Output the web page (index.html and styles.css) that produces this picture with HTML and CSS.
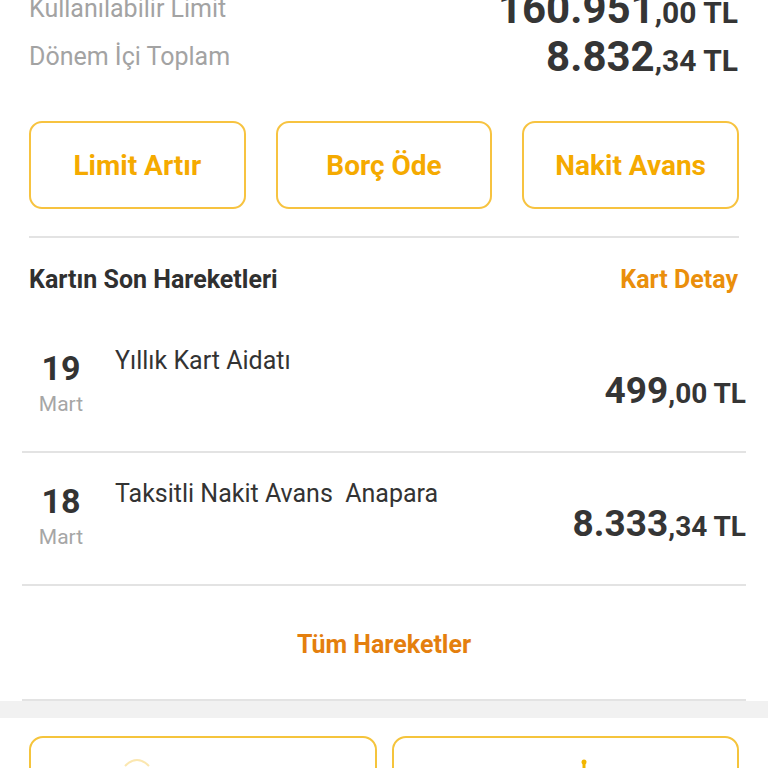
FILE: index.html
```html
<!DOCTYPE html>
<html lang="tr">
<head>
<meta charset="utf-8">
<title>Kart</title>
<link rel="stylesheet" href="styles.css">
</head>
<body>
<div class="page">
  <section class="summary">
    <div class="sum-row">
      <span class="sum-label">Kullanılabilir Limit</span>
      <span class="amount sum-amount"><span class="big">160.951</span><span class="small">,00 TL</span></span>
    </div>
    <div class="sum-row">
      <span class="sum-label">Dönem İçi Toplam</span>
      <span class="amount sum-amount"><span class="big">8.832</span><span class="small">,34 TL</span></span>
    </div>
  </section>

  <section class="actions">
    <button class="act-btn">Limit Artır</button>
    <button class="act-btn">Borç Öde</button>
    <button class="act-btn">Nakit Avans</button>
  </section>

  <div class="divider inset"></div>

  <section class="tx-head">
    <span class="tx-title">Kartın Son Hareketleri</span>
    <span class="tx-link">Kart Detay</span>
  </section>

  <section class="tx-list">
    <div class="tx-row">
      <div class="tx-date">
        <span class="day">19</span>
        <span class="month">Mart</span>
      </div>
      <div class="tx-desc">Yıllık Kart Aidatı</div>
      <div class="amount tx-amount"><span class="big">499</span><span class="small">,00 TL</span></div>
    </div>
    <div class="tx-row">
      <div class="tx-date">
        <span class="day">18</span>
        <span class="month">Mart</span>
      </div>
      <div class="tx-desc">Taksitli Nakit Avans&nbsp; Anapara</div>
      <div class="amount tx-amount"><span class="big">8.333</span><span class="small">,34 TL</span></div>
    </div>
    <div class="tx-all">Tüm Hareketler</div>
  </section>

  <div class="band"></div>

  <section class="cards">
    <div class="card">
      <svg class="card-icon left" width="40" height="40" viewBox="0 0 40 40"><path d="M8 22 Q20 10 32 22" fill="none" stroke="#fbe7b0" stroke-width="2"/></svg>
    </div>
    <div class="card">
      <svg class="card-icon right" width="40" height="40" viewBox="0 0 40 40"><circle cx="20" cy="6" r="2.5" fill="#f2b600"/><path d="M20 8 V30" stroke="#f2b600" stroke-width="3" fill="none"/></svg>
    </div>
  </section>
</div>
</body>
</html>
```

FILE: styles.css
```css
* { box-sizing: border-box; }
html, body { margin: 0; padding: 0; }
body {
  width: 768px;
  height: 768px;
  overflow: hidden;
  background: #ffffff;
  font-family: Roboto, "Noto Sans", "Liberation Sans", sans-serif;
  color: #333333;
}
.page { width: 768px; }

.summary {
  margin-top: -16px;
  padding: 0 30px 0 29px;
}
.sum-row {
  height: 48px;
  display: flex;
  align-items: center;
  justify-content: space-between;
}
.sum-label {
  font-size: 25px;
  color: #a3a3a3;
}
.amount {
  font-weight: 700;
  color: #353535;
  white-space: nowrap;
}
.sum-amount .big { font-size: 42px; }
.sum-amount .small { font-size: 30px; }

.actions {
  margin-top: 41px;
  padding: 0 29px;
  display: grid;
  grid-template-columns: repeat(3, 1fr);
  column-gap: 30px;
}
.act-btn {
  height: 88px;
  border: 2px solid #f7c340;
  border-radius: 13px;
  background: #ffffff;
  color: #f5aa00;
  font-family: Roboto, "Noto Sans", sans-serif;
  font-weight: 700;
  font-size: 28px;
  padding: 0;
}

.divider { height: 2px; background: #e3e3e3; }
.divider.inset { margin: 27px 29px 0 29px; }

.tx-head {
  height: 82px;
  padding: 0 30px 0 29px;
  display: flex;
  align-items: center;
  justify-content: space-between;
}
.tx-title { font-size: 25px; font-weight: 700; color: #303030; }
.tx-link { font-size: 25px; font-weight: 700; color: #ea8f0c; }

.tx-list { margin: 0 22px; }
.tx-row {
  height: 133px;
  border-bottom: 2px solid #e3e3e3;
  display: flex;
  align-items: flex-start;
}
.tx-date {
  width: 78px;
  display: flex;
  flex-direction: column;
  align-items: center;
  margin-top: 29px;
}
.day { font-size: 34px; font-weight: 700; line-height: 38px; color: #333333; }
.month { font-size: 21px; line-height: 26px; margin-top: 4px; color: #a6a6a6; }
.tx-desc {
  margin-left: 15px;
  margin-top: 26px;
  font-size: 25px;
  line-height: 30px;
  color: #333333;
  flex: 1;
}
.tx-amount { margin-top: 49px; line-height: 44px; }
.tx-amount .big { font-size: 37px; }
.tx-amount .small { font-size: 28px; }

.tx-all {
  height: 115px;
  border-bottom: 2px solid #e3e3e3;
  display: flex;
  align-items: center;
  justify-content: center;
  font-size: 25px;
  font-weight: 700;
  color: #e47f0e;
  padding-top: 4px;
}

.band { height: 17px; background: #f1f1f1; }

.cards {
  margin-top: 18px;
  padding: 0 29px;
  display: grid;
  grid-template-columns: 1fr 1fr;
  column-gap: 15px;
}
.card {
  height: 120px;
  border: 2px solid #f5c43c;
  border-radius: 14px;
  position: relative;
}
.card-icon { position: absolute; }
.card-icon.left { left: 86px; top: 6px; }
.card-icon.right { left: 170px; top: 18px; }
```
